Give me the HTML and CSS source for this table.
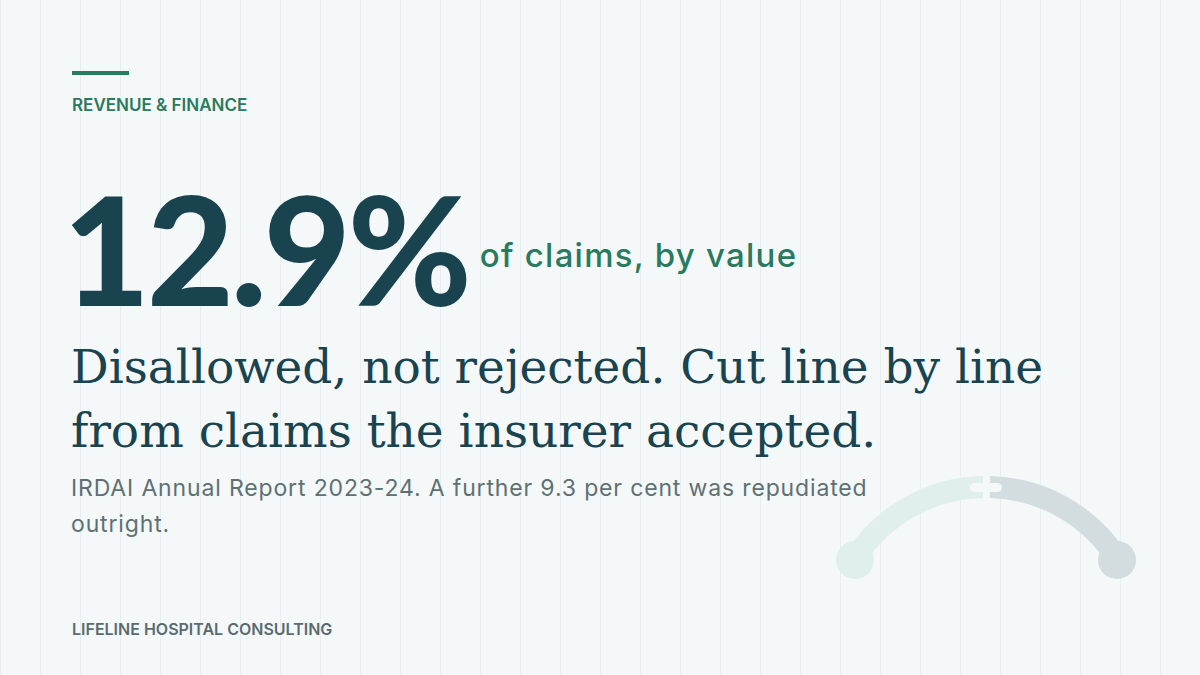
FILE: index.html
```html
<!DOCTYPE html>
<html lang="en">
<head>
<meta charset="utf-8">
<title>Revenue &amp; Finance</title>
<link rel="stylesheet" href="styles.css">
</head>
<body>
<main class="card">
  <div class="rule"></div>
  <p class="eyebrow">REVENUE &amp; FINANCE</p>
  <div class="stat-row">
    <span class="stat">12.9%</span>
    <span class="stat-label">of claims, by value</span>
  </div>
  <h1 class="headline">Disallowed, not rejected. Cut line by line from claims the insurer accepted.</h1>
  <p class="source">IRDAI Annual Report 2023-24. A further 9.3 per cent was repudiated outright.</p>
  <p class="brand">LIFELINE HOSPITAL CONSULTING</p>
  <svg class="gauge" width="320" height="130" viewBox="820 460 320 130" aria-hidden="true">
    <path d="M855 558 A156 156 0 0 1 983 487" fill="none" stroke="#e0efeb" stroke-width="22"/>
    <path d="M990 487 A156 156 0 0 1 1117 558" fill="none" stroke="#d3dcdf" stroke-width="22"/>
    <circle cx="855" cy="560" r="19" fill="#e0efeb"/>
    <circle cx="1117" cy="560" r="19" fill="#d3dcdf"/>
    <rect x="970" y="483" width="32" height="9" rx="4.5" fill="#f4f8f9"/>
  </svg>
</main>
</body>
</html>
```

FILE: styles.css
```css
* { box-sizing: border-box; }
html, body { margin: 0; padding: 0; }
body {
  width: 1200px;
  height: 675px;
  overflow: hidden;
  background-color: #f4f8f9;
  background-image: linear-gradient(to right, #e7eeef 1px, transparent 1px);
  background-size: 40px 100%;
  font-family: "Inter", "Noto Sans", sans-serif;
}
.card {
  position: relative;
  width: 1200px;
  height: 675px;
  padding: 71px 72px 0 72px;
  display: flex;
  flex-direction: column;
}
.rule {
  width: 57px;
  height: 4px;
  background: #2a7a5f;
}
.eyebrow {
  margin: 18px 0 0 0;
  font-size: 17px;
  line-height: 24px;
  font-weight: 600;
  color: #2a7a5f;
}
.stat-row {
  display: flex;
  align-items: flex-start;
  gap: 11px;
  margin-top: 56px;
}
.stat {
  margin-left: -9px;
  font-family: "Lato", "Inter", sans-serif;
  font-size: 150px;
  line-height: 150px;
  font-weight: 900;
  letter-spacing: -3px;
  color: #1a4350;
}
.stat-label {
  margin-top: 62px;
  font-size: 33px;
  line-height: 40px;
  font-weight: 500;
  letter-spacing: 1.25px;
  color: #2a7a5f;
}
.headline {
  margin: 12px 0 0 -1px;
  max-width: 1000px;
  font-family: "DejaVu Serif", serif;
  font-weight: 400;
  font-size: 47px;
  line-height: 64px;
  color: #1a4350;
}
.source {
  margin: 7px 0 0 -1px;
  max-width: 840px;
  font-size: 23px;
  line-height: 36px;
  letter-spacing: 0.85px;
  color: #5f7073;
}
.brand {
  margin: auto 0 34px 0;
  font-size: 16px;
  line-height: 24px;
  font-weight: 600;
  color: #5a6b70;
}
.gauge {
  position: absolute;
  left: 820px;
  top: 460px;
}
```
